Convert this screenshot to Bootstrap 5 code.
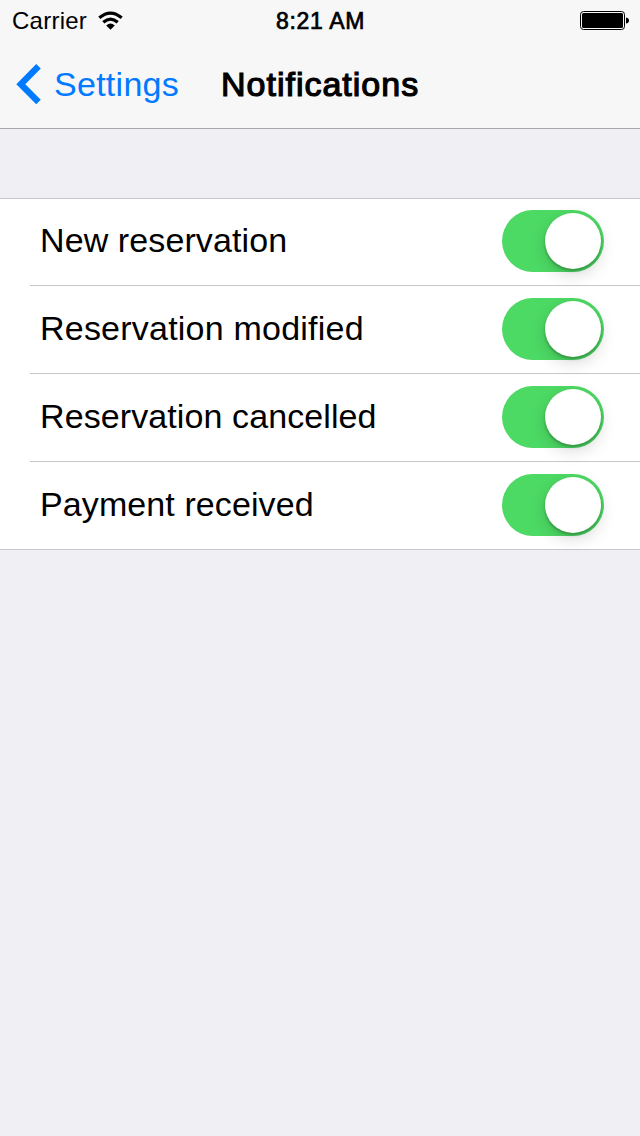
<!DOCTYPE html>
<html lang="en">
<head>
<meta charset="utf-8">
<meta name="viewport" content="width=device-width, initial-scale=1">
<title>Notifications</title>
<link href="https://cdn.jsdelivr.net/npm/bootstrap@5.3.0/dist/css/bootstrap.min.css" rel="stylesheet">
<style>
body { background: #efeff4; color: #000; font-family: "Liberation Sans", Arial, sans-serif; min-height: 1136px; overflow-x: hidden; }
.top-area { background: #f7f7f7; height: 129px; border-bottom: 1px solid #a7a7aa; }
.status-bar { height: 40px; font-size: 24px; line-height: 40px; padding: 2px 11px 0 12px; }
.status-bar > * { flex: 1 1 0; }
.carrier { letter-spacing: .25px; }
.clock { font-size: 23px; letter-spacing: .65px; -webkit-text-stroke: .7px #000; }
.title-bar { height: 88px; font-size: 34px; line-height: 88px; }
.back-link { color: #007aff; width: 221px; padding-left: 16px; }
.back-link span { margin-left: 12px; letter-spacing: .28px; }
.page-title { font-size: 34px; font-weight: 400; line-height: 88px; letter-spacing: 1px; -webkit-text-stroke: 1.2px #000; }
.settings-list { margin-top: 69px; border-top: 1px solid #c8c7cc; border-bottom: 1px solid #c8c7cc; height: 352px; }
.setting-row { height: 88px; padding: 0 36px 1px 10px; margin-left: 30px; border-bottom: 1px solid #c8c7cc; }
.setting-row:first-child { height: 87px; padding-bottom: 2px; }
.setting-row:last-child { border-bottom: 0; height: 87px; }
.setting-row label { font-size: 34px; line-height: 84px; padding-bottom: 2px; letter-spacing: .1px; }
.form-check-input.toggle { width: 102px; height: 62px; margin: 0; border: 0; border-radius: 31px; background: #4cd964; }
.form-check-input.toggle::before { content: ""; display: block; width: 56px; height: 56px; margin: 3px 0 0 43px; border-radius: 50%; background: #fff; box-shadow: 0 6px 16px rgba(0,0,0,.15), 0 2px 3px rgba(0,0,0,.25); }
</style>
<script src="https://cdn.jsdelivr.net/npm/bootstrap@5.3.0/dist/js/bootstrap.bundle.min.js"></script>
</head>
<body>
<header class="top-area">
  <div class="status-bar d-flex align-items-center">
    <div class="d-flex align-items-center"><span class="carrier">Carrier</span>
      <svg class="ms-2" width="30" height="24" viewBox="0 0 30 24" fill="none" stroke="#000" stroke-width="3.2">
        <path d="M4.3 8.8Q15.5 -.6 26.7 8.8"/><path d="M8.3 13.2Q15.5 7 22.7 13.2"/><path d="M11.2 16.6Q15.5 12.6 19.8 16.6L15.5 20.8Z" fill="#000" stroke="none"/>
      </svg>
    </div>
    <div class="clock text-center">8:21 AM</div>
    <div class="d-flex justify-content-end align-items-center">
      <svg width="50" height="20" viewBox="0 0 50 20">
        <rect x="1.5" y=".5" width="44" height="18" rx="3" fill="none" stroke="#000"/>
        <rect x="3" y="2" width="41" height="15" rx="1.5"/><path d="M47 6.5Q50 7 50 9.5T47 12.5Z"/>
      </svg>
    </div>
  </div>
  <nav class="title-bar d-flex align-items-center">
    <a class="back-link d-flex align-items-center text-decoration-none" href="#">
      <svg width="26" height="42" viewBox="0 0 26 42" fill="none" stroke="#007aff" stroke-width="6.4"><path d="M22.5 3.3L4.8 21.2L22.5 39"/></svg>
      <span>Settings</span>
    </a>
    <h1 class="page-title m-0">Notifications</h1>
  </nav>
</header>
<main>
  <div class="settings-list bg-white">
    <div class="setting-row d-flex align-items-center justify-content-between"><label for="s1">New reservation</label><input class="form-check-input toggle" type="checkbox" role="switch" id="s1" checked></div>
    <div class="setting-row d-flex align-items-center justify-content-between"><label for="s2" style="letter-spacing:.22px">Reservation modified</label><input class="form-check-input toggle" type="checkbox" role="switch" id="s2" checked></div>
    <div class="setting-row d-flex align-items-center justify-content-between"><label for="s3">Reservation cancelled</label><input class="form-check-input toggle" type="checkbox" role="switch" id="s3" checked></div>
    <div class="setting-row d-flex align-items-center justify-content-between"><label for="s4">Payment received</label><input class="form-check-input toggle" type="checkbox" role="switch" id="s4" checked></div>
  </div>
</main>
</body>
</html>
